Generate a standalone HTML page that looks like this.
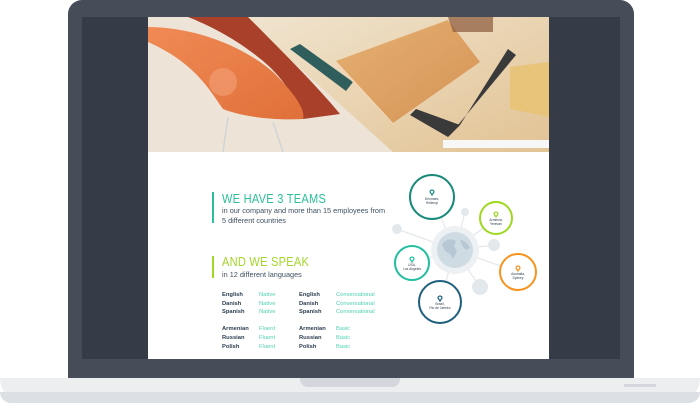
<!DOCTYPE html>
<html><head><style>
body{margin:0;width:700px;height:403px;background:#fff;overflow:hidden;position:relative;font-family:"Liberation Sans",sans-serif}
.a{position:absolute}
.t{font-size:5.8px;color:#2d3e50;font-weight:bold}
.v{font-size:5.8px;color:#4fd1b2}
.h{font-family:"Liberation Sans Narrow","Liberation Sans",sans-serif;transform:scaleX(.85);transform-origin:left;font-size:13px;letter-spacing:.3px}
</style></head><body>
<div class="a" style="left:68px;top:0;width:566px;height:385px;background:#464d59;border-radius:14px 14px 0 0"></div>
<div class="a" style="left:82px;top:17px;width:538px;height:342px;background:#363c47"></div>
<div class="a" style="left:0;top:378px;width:700px;height:25px;background:#eceef0;border-radius:0 0 40px 40px"></div>
<div class="a" style="left:0;top:392px;width:700px;height:11px;background:#dcdfe3;border-radius:0 0 40px 40px"></div>
<div class="a" style="left:300px;top:378px;width:100px;height:9px;background:#d3d6da;border-radius:0 0 8px 8px"></div>
<div class="a" style="left:624px;top:384px;width:32px;height:3px;background:#d3d6da"></div>
<div class="a" style="left:148px;top:17px;width:401px;height:342px;background:#fff"></div>
<svg class="a" style="left:148px;top:17px" width="401" height="135">
<defs><linearGradient id="w" x1="0" y1="0" x2="1" y2="1"><stop offset="0" stop-color="#f0e4cf"/><stop offset="1" stop-color="#e2c394"/></linearGradient>
<linearGradient id="c" x1="0" y1="0" x2="1" y2="1"><stop offset="0" stop-color="#f08a55"/><stop offset="1" stop-color="#e0703a"/></linearGradient>
<linearGradient id="n" x1="0" y1="0" x2="1" y2="1"><stop offset="0" stop-color="#e6b073"/><stop offset="1" stop-color="#d49455"/></linearGradient></defs>
<rect width="401" height="135" fill="#ede3d6"/>
<polygon points="95,0 401,0 401,135 245,135" fill="url(#w)"/>
<path d="M40,0 L100,0 C130,30 170,70 192,97 L155,102 C145,75 130,55 110,40 C85,20 60,8 40,0Z" fill="#a8402a"/>
<path d="M0,10 C40,10 90,25 125,55 C145,75 158,92 155,102 C120,104 90,98 75,92 C60,70 45,45 0,25Z" fill="url(#c)"/>
<circle cx="75" cy="65" r="14" fill="#f4a27a" opacity=".6"/>
<line x1="80" y1="100" x2="75" y2="135" stroke="#cfd6d8" stroke-width="1.5"/><line x1="125" y1="105" x2="135" y2="135" stroke="#cfd6d8" stroke-width="1.5"/>
<polygon points="142,32 152,27 205,65 198,74" fill="#2f5e5c"/>
<polygon points="262,98 268,92 312,108 300,120" fill="#3a3a3a"/>
<polygon points="300,120 312,108 360,32 368,38" fill="#3a3a3a"/>
<polygon points="188,44 300,3 332,45 245,106" fill="url(#n)"/>
<polygon points="188,44 245,106 248,110 190,50" fill="#f3d6b6"/>
<polygon points="362,50 401,45 401,100 362,92" fill="#e8c37a"/>
<polygon points="300,0 345,0 345,15 305,15" fill="#8a5a3a" opacity=".7"/>
<rect x="295" y="123" width="106" height="8" fill="#f7f7f7"/>
</svg>
<div class="a" style="left:212px;top:192px;width:2px;height:31px;background:#2bbf9a"></div>
<div class="a h" style="left:222px;top:191px;color:#2bbf9a">WE HAVE 3 TEAMS</div>
<div class="a" style="left:222px;top:206px;font-size:7.3px;color:#3f5060;line-height:10px">in our company and more than 15 employees from<br>5 different countries</div>
<div class="a" style="left:212px;top:256px;width:2px;height:22px;background:#a4d62a"></div>
<div class="a h" style="left:222px;top:254px;color:#a4d62a">AND WE SPEAK</div>
<div class="a" style="left:222px;top:270px;font-size:7.3px;color:#3f5060">in 12 different languages</div>
<div class="a" style="left:222px;top:291px;line-height:8.7px"><div class="t">English<br>Danish<br>Spanish</div><div class="t" style="margin-top:8px">Armenian<br>Russian<br>Polish</div></div>
<div class="a" style="left:259px;top:291px;line-height:8.7px"><div class="v">Native<br>Native<br>Native</div><div class="v" style="margin-top:8px">Fluent<br>Fluent<br>Fluent</div></div>
<div class="a" style="left:299px;top:291px;line-height:8.7px"><div class="t">English<br>Danish<br>Spanish</div><div class="t" style="margin-top:8px">Armenian<br>Russian<br>Polish</div></div>
<div class="a" style="left:336px;top:291px;line-height:8.7px"><div class="v">Conversational<br>Conversational<br>Conversational</div><div class="v" style="margin-top:8px">Basic<br>Basic<br>Basic</div></div>
<svg class="a" style="left:380px;top:170px" width="170" height="160" font-family="Liberation Sans" font-size="3.3" text-anchor="middle" fill="#2d3e50">
<g stroke="#e3e8ec" stroke-width="1.2">
<line x1="75" y1="80" x2="17" y2="59"/><line x1="75" y1="80" x2="52" y2="27"/><line x1="75" y1="80" x2="85" y2="42"/><line x1="75" y1="80" x2="116" y2="48"/><line x1="75" y1="80" x2="114" y2="75"/><line x1="75" y1="80" x2="138" y2="102"/><line x1="75" y1="80" x2="100" y2="117"/><line x1="75" y1="80" x2="60" y2="132"/><line x1="75" y1="80" x2="32" y2="93"/></g>
<g fill="#e3e8ec"><circle cx="17" cy="59" r="5"/><circle cx="85" cy="42" r="4"/><circle cx="114" cy="75" r="6"/><circle cx="100" cy="117" r="8"/></g>
<circle cx="75" cy="80" r="24" fill="#eef1f4"/><circle cx="75" cy="80" r="18" fill="#cfdbe3"/>
<path d="M62,74 c4,-5 10,-6 14,-3 l-2,5 l3,5 l-4,8 l-3,-5 l-5,-3z M80,70 c5,0 8,4 10,8 l-4,2 l-3,-3z" fill="#b7c8d4"/>
<g fill="#fff" stroke-width="2">
<circle cx="52" cy="27" r="22" stroke="#1a8a7a"/><circle cx="116" cy="48" r="16" stroke="#9ed81f"/><circle cx="32" cy="93" r="17" stroke="#1fbf9f"/><circle cx="138" cy="102" r="18" stroke="#f7941d"/><circle cx="60" cy="132" r="21" stroke="#1e5f7f"/></g>
<g fill="none" stroke-width="1.2">
<path d="M52,25 l-2,-3 a2,2 0 1 1 4,0z" stroke="#1a8a7a"/><path d="M116,47 l-2,-3 a2,2 0 1 1 4,0z" stroke="#9ed81f"/><path d="M32,92 l-2,-3 a2,2 0 1 1 4,0z" stroke="#1fbf9f"/><path d="M138,101 l-2,-3 a2,2 0 1 1 4,0z" stroke="#f7941d"/><path d="M60,131 l-2,-3 a2,2 0 1 1 4,0z" stroke="#1e5f7f"/></g>
<text x="52" y="30">Denmark,</text><text x="52" y="34">Hellerup</text>
<text x="116" y="51">Armenia,</text><text x="116" y="55">Yerevan</text>
<text x="32" y="96">USA,</text><text x="32" y="100">Los Angeles</text>
<text x="138" y="105">Australia,</text><text x="138" y="109">Sydney</text>
<text x="60" y="135">Brazil,</text><text x="60" y="139">Rio de Janeiro</text>
</svg>
</body></html>
